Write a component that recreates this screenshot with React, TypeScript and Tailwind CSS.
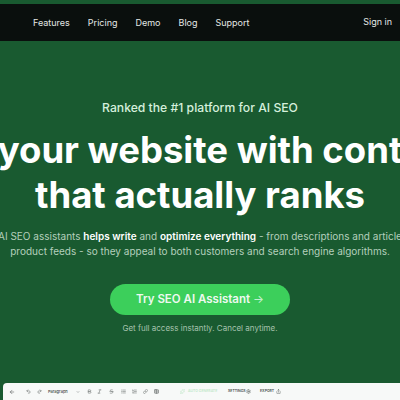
import {ArrowLeft, Undo2, Redo2, ChevronDown, Bold, Italic, Strikethrough, List, ListOrdered, Link, Table, Sparkles, Settings, Share} from 'lucide-react';

const navLinks = ['Features', 'Pricing', 'Demo', 'Blog', 'Support'];

export default function App() {
  return (
    <div className="flex h-[400px] w-[400px] flex-col overflow-hidden bg-[#195a30] font-['Inter',sans-serif]">
      <div className="mt-[4px] flex h-[37px] shrink-0 items-center justify-between bg-[#0a0f0d] pl-[33px] pr-[8px]">
        <nav className="flex gap-[18px] text-[9px] text-[#e4e7e5]">
          {navLinks.map((link) => (
            <a key={link}>{link}</a>
          ))}
        </nav>
        <a className="mb-[1px] text-[9px] text-[#e4e7e5]">Sign in</a>
      </div>

      <section className="flex flex-1 flex-col items-center overflow-hidden pt-[59px]">
        <p className="whitespace-nowrap text-[12.2px] leading-[16px] font-medium text-[#d5f0dc]">
          Ranked the #1 platform for AI SEO
        </p>
        <h1 className="mt-[12px] text-center text-[36.5px] leading-[45px] font-bold whitespace-nowrap text-white">
          <div>your website with cont</div>
          <div>that actually ranks</div>
        </h1>
        <p className="mt-[11px] text-center text-[10px] leading-[15px] whitespace-nowrap text-[#b4cfbc]">
          <span className="block">
            AI SEO assistants <b className="font-semibold text-white">helps write</b> and{' '}
            <b className="font-semibold text-white">optimize everything</b> - from descriptions and article
          </span>
          <span className="block">product feeds - so they appeal to both customers and search engine algorithms.</span>
        </p>
        <button className="mt-[25px] h-[31px] w-[180px] shrink-0 rounded-full bg-[#3ccf5b] text-[11.5px] font-semibold text-[#eef9f0]">
          Try SEO AI Assistant <span className="font-normal text-[#c4f0cf]">→</span>
        </button>
        <p className="mt-[8px] text-[8px] leading-[10px] text-[#a6c3ae]">Get full access instantly. Cancel anytime.</p>
      </section>

      <div className="ml-[3px] flex h-[17px] shrink-0 items-center rounded-tl-[4px] bg-[#f7f9f8] pl-[6px] text-[#444b48]">
        <ArrowLeft size={6} />
        <Undo2 size={5} className="ml-[10.5px]" />
        <Redo2 size={5} className="ml-[6px]" />
        <span className="ml-[6.5px] w-[19px] text-[4px] font-medium whitespace-nowrap">Paragraph</span>
        <ChevronDown size={4} className="ml-[9px]" />
        <Bold size={5} className="ml-[6.5px]" />
        <Italic size={5} className="ml-[5px]" />
        <Strikethrough size={5} className="ml-[7px]" />
        <List size={5} className="ml-[7px]" />
        <ListOrdered size={5} className="ml-[6px]" />
        <Link size={5} className="ml-[6px]" />
        <Table size={5} className="ml-[6px]" />
        <Sparkles size={5} className="ml-[21px] text-[#bfe8c9]" />
        <span className="ml-[3.5px] w-[30px] text-[3.5px] font-semibold whitespace-nowrap text-[#bfe8c9]">AUTO GENERATE</span>
        <span className="ml-[10px] w-[16px] text-[3.5px] font-semibold">SETTINGS</span>
        <Settings size={5} className="ml-[1.5px]" />
        <span className="ml-[9.5px] w-[14px] text-[3.5px] font-semibold">EXPORT</span>
        <Share size={5} className="ml-[1.5px]" />
      </div>
    </div>
  );
}
